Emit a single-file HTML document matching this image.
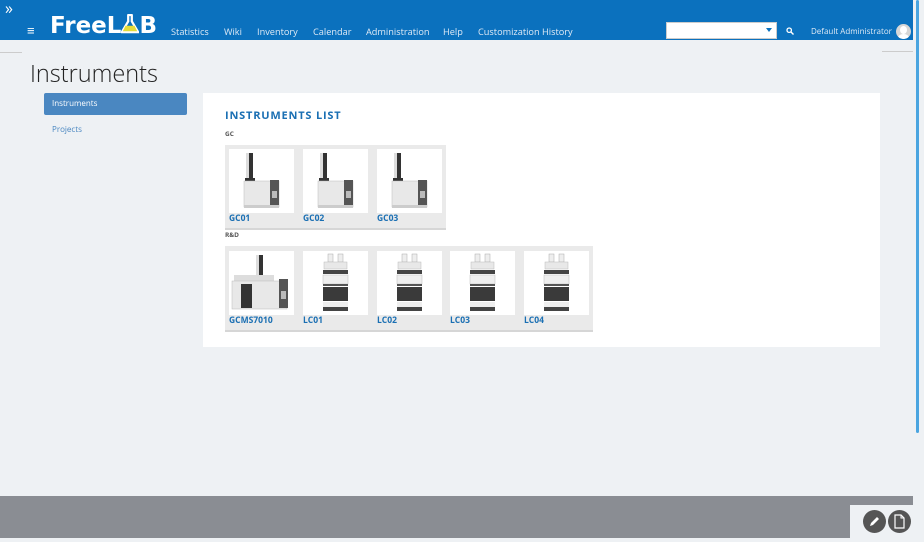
<!DOCTYPE html>
<html><head><meta charset="utf-8"><style>
*{margin:0;padding:0;box-sizing:border-box}
body{width:924px;height:542px;overflow:hidden;background:#eef1f4;font-family:"Open Sans","Liberation Sans",sans-serif;position:relative}
.a{position:absolute}
#hdr{left:0;top:0;width:913px;height:40px;background:#0b71be}
.nav{color:#dfeaf6;font-size:9.2px;top:25px}
.logo{left:50px;top:13px;color:#fff;font-weight:bold;font-size:23px;letter-spacing:0;line-height:26px;font-family:"DejaVu Sans","Liberation Sans",sans-serif}
.box{background:#eaeaea;border-bottom:2px solid #d6d6d6}
.card{width:65px;height:64px;background:#fff}
.lbl{color:#1a6fb3;font-size:8.5px;font-weight:bold}
.grp{font-size:6.5px;color:#555;font-weight:bold}
</style></head><body>
<div id="hdr" class="a"></div>
<div class="a" style="left:5px;top:0px;color:#fff;font-size:16px;line-height:16px">»</div>
<div class="a" style="left:27px;top:23px;color:#fff;font-size:13px;line-height:14px;font-weight:bold">≡</div>
<div class="a logo">FreeL<span style="display:inline-block;width:18px;position:relative;height:18px;vertical-align:-1px"><svg width="18" height="20" viewBox="0 0 20 22" style="position:absolute;left:0;top:-2px"><path d="M7 1h6M8 1v7L1 20h18L12 8V1" fill="none" stroke="#fff" stroke-width="2.5"/><path d="M5 13h10l3 6H2z" fill="#e4dc3a"/></svg></span>B</div>
<div class="a nav" style="left:171px">Statistics</div>
<div class="a nav" style="left:224px">Wiki</div>
<div class="a nav" style="left:257px">Inventory</div>
<div class="a nav" style="left:313px">Calendar</div>
<div class="a nav" style="left:366px">Administration</div>
<div class="a nav" style="left:443px">Help</div>
<div class="a nav" style="left:478px">Customization History</div>
<div class="a" style="left:666px;top:22px;width:111px;height:17px;background:#fff;border:1px solid #ccc"></div>
<div class="a" style="left:766px;top:28px;width:0;height:0;border-left:3px solid transparent;border-right:3px solid transparent;border-top:4px solid #0b71be"></div>
<svg class="a" style="left:786px;top:27px" width="8" height="8" viewBox="0 0 8 8"><circle cx="3.2" cy="3.2" r="2.2" fill="none" stroke="#fff" stroke-width="1.3"/><path d="M5 5l2.5 2.5" stroke="#fff" stroke-width="1.4"/></svg>
<div class="a nav" style="left:811px;top:26px;font-size:8px">Default Administrator</div>
<div class="a" style="left:896px;top:24px;width:15px;height:15px;border-radius:50%;background:#d7d7d7;overflow:hidden"><div class="a" style="left:4px;top:2px;width:7px;height:8px;border-radius:50%;background:#fff"></div><div class="a" style="left:2px;top:10px;width:11px;height:8px;border-radius:50%;background:#fff"></div></div>
<div class="a" style="left:0;top:52px;width:22px;height:1px;background:#ccc"></div>
<div class="a" style="left:882px;top:51px;width:31px;height:1px;background:#ccc"></div>
<div class="a" style="left:913px;top:0;width:11px;height:542px;background:#eef1f4"></div>
<div class="a" style="left:916px;top:0;width:3px;height:433px;background:#4aa5e0;border-radius:2px"></div>
<div class="a" style="left:30px;top:57px;font-size:23.5px;color:#222;font-weight:300">Instruments</div>
<div class="a" style="left:44px;top:93px;width:143px;height:22px;background:#4a87c1;border-radius:2px;color:#fff;font-size:8px;line-height:22px;padding-left:8px">Instruments</div>
<div class="a" style="left:52px;top:124px;font-size:8px;color:#4a87c1">Projects</div>
<div class="a" style="left:203px;top:93px;width:677px;height:254px;background:#fff"></div>
<div class="a" style="left:225px;top:108px;font-size:11px;font-weight:bold;color:#1a6fb3;letter-spacing:0.8px">INSTRUMENTS LIST</div>
<div class="a grp" style="left:225px;top:129px">GC</div>
<div class="a box" style="left:225px;top:145px;width:221px;height:85px"></div>
<div class="a grp" style="left:225px;top:230px">R&amp;D</div>
<div class="a box" style="left:225px;top:246px;width:368px;height:86px"></div>

<svg width="0" height="0" style="position:absolute"><defs>
<g id="gc"><rect x="17" y="4" width="3" height="28" fill="#ddd"/><rect x="20" y="4" width="4" height="26" fill="#333"/><rect x="16" y="29" width="10" height="3" fill="#333"/><rect x="15" y="32" width="35" height="26" fill="#e8e8e8" stroke="#bbb" stroke-width=".5"/><rect x="41" y="31" width="9" height="26" fill="#555"/><rect x="43" y="42" width="5" height="7" fill="#bbb"/><rect x="15" y="56" width="35" height="3" fill="#ccc"/></g>
<g id="lc"><rect x="25" y="3" width="5" height="8" fill="#eee" stroke="#aaa" stroke-width=".5"/><rect x="35" y="3" width="5" height="8" fill="#eee" stroke="#aaa" stroke-width=".5"/><rect x="21" y="11" width="23" height="7" fill="#e8e8e8" stroke="#bbb" stroke-width=".5"/><rect x="20" y="19" width="25" height="4" fill="#444"/><rect x="20" y="24" width="25" height="9" fill="#eee" stroke="#bbb" stroke-width=".5"/><rect x="20" y="33" width="25" height="2" fill="#555"/><rect x="20" y="36" width="25" height="14" fill="#3a3a3a"/><rect x="20" y="51" width="25" height="5" fill="#eee"/><rect x="20" y="56" width="25" height="4" fill="#444"/></g>
<g id="ms"><rect x="27" y="4" width="3" height="22" fill="#ddd"/><rect x="30" y="4" width="4" height="20" fill="#333"/><rect x="5" y="24" width="40" height="6" fill="#ddd"/><rect x="3" y="30" width="55" height="28" fill="#e8e8e8" stroke="#bbb" stroke-width=".5"/><rect x="12" y="33" width="11" height="24" fill="#333"/><rect x="50" y="28" width="9" height="29" fill="#555"/><rect x="52" y="40" width="5" height="8" fill="#bbb"/></g>
</defs></svg>

<div class="a card" style="left:229px;top:149px"><svg width="65" height="64"><use href="#gc"/></svg></div>
<div class="a card" style="left:303px;top:149px"><svg width="65" height="64"><use href="#gc"/></svg></div>
<div class="a card" style="left:377px;top:149px"><svg width="65" height="64"><use href="#gc"/></svg></div>
<div class="a lbl" style="left:229px;top:213px">GC01</div>
<div class="a lbl" style="left:303px;top:213px">GC02</div>
<div class="a lbl" style="left:377px;top:213px">GC03</div>

<div class="a card" style="left:229px;top:251px"><svg width="65" height="64"><use href="#ms"/></svg></div>
<div class="a card" style="left:303px;top:251px"><svg width="65" height="64"><use href="#lc"/></svg></div>
<div class="a card" style="left:377px;top:251px"><svg width="65" height="64"><use href="#lc"/></svg></div>
<div class="a card" style="left:450px;top:251px"><svg width="65" height="64"><use href="#lc"/></svg></div>
<div class="a card" style="left:524px;top:251px"><svg width="65" height="64"><use href="#lc"/></svg></div>
<div class="a lbl" style="left:229px;top:315px">GCMS7010</div>
<div class="a lbl" style="left:303px;top:315px">LC01</div>
<div class="a lbl" style="left:377px;top:315px">LC02</div>
<div class="a lbl" style="left:450px;top:315px">LC03</div>
<div class="a lbl" style="left:524px;top:315px">LC04</div>

<div class="a" style="left:0;top:496px;width:913px;height:42px;background:#8a8d93"></div>
<div class="a" style="left:0;top:538px;width:924px;height:4px;background:#eef1f4"></div>
<div class="a" style="left:850px;top:505px;width:63px;height:37px;background:#eef1f4"></div>
<div class="a" style="left:863px;top:510px;width:23px;height:23px;border-radius:50%;background:#555"></div>
<svg class="a" style="left:867px;top:514px" width="15" height="15" viewBox="0 0 15 15"><path d="M3 12l1-3 6-6 2 2-6 6z" fill="#fff"/></svg>
<div class="a" style="left:888px;top:510px;width:23px;height:23px;border-radius:50%;background:#555"></div>
<svg class="a" style="left:893px;top:514px" width="13" height="15" viewBox="0 0 13 15"><path d="M2 1h6l3 3v10H2z" fill="none" stroke="#fff" stroke-width="1.2"/><path d="M8 1v3h3" fill="none" stroke="#fff" stroke-width="1"/></svg>
</body></html>
